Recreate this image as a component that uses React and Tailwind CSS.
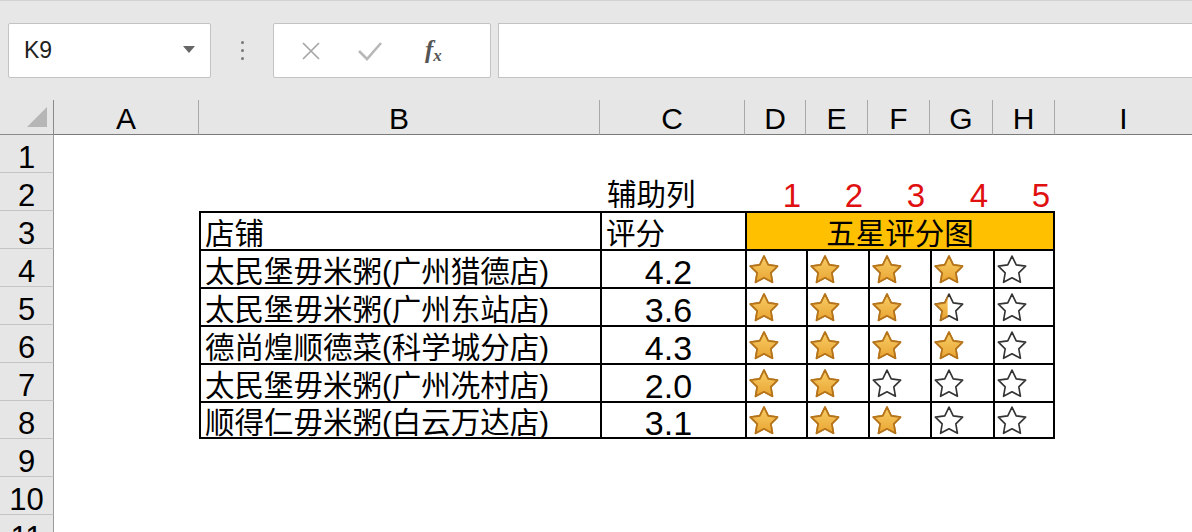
import React from "react";

const FONT = { fontFamily: '"Liberation Sans", "Noto Sans CJK SC", sans-serif' };

function Star({ fill, id }) {
  const path =
    "M12 1.8l3.1 6.4 6.9 1-5 4.9 1.2 6.9-6.2-3.3-6.2 3.3 1.2-6.9-5-4.9 6.9-1z";
  return (
    <svg width="30" height="30" viewBox="1 1 22 22">
      <defs>
        <linearGradient id={`g${id}`} x1="0" y1="0" x2="0" y2="1">
          <stop offset="0" stopColor="#f8cd66" />
          <stop offset="1" stopColor="#e9a533" />
        </linearGradient>
        <clipPath id={`c${id}`}>
          <rect x="0" y="0" width={2 + 20 * fill} height="24" />
        </clipPath>
      </defs>
      <path d={path} fill="#ffffff" stroke={fill === 1 ? "#b5731a" : "#333333"} strokeWidth="1.2" strokeLinejoin="round" />
      {fill > 0 && (
        <path
          d={path}
          fill={`url(#g${id})`}
          stroke="#b5731a"
          strokeWidth="1.3"
          strokeLinejoin="round"
          clipPath={`url(#c${id})`}
        />
      )}
    </svg>
  );
}

const rows = [
  { name: "太民堡毋米粥(广州猎德店)", score: "4.2", stars: [1, 1, 1, 1, 0] },
  { name: "太民堡毋米粥(广州东站店)", score: "3.6", stars: [1, 1, 1, 0.45, 0] },
  { name: "德尚煌顺德菜(科学城分店)", score: "4.3", stars: [1, 1, 1, 1, 0] },
  { name: "太民堡毋米粥(广州冼村店)", score: "2.0", stars: [1, 1, 0, 0, 0] },
  { name: "顺得仁毋米粥(白云万达店)", score: "3.1", stars: [1, 1, 1, 0, 0] },
];

const cols = ["A", "B", "C", "D", "E", "F", "G", "H", "I"];

function RowHead({ n }) {
  return (
    <div className="flex items-center justify-center border-b border-r border-b-[#c4c4c4] border-r-[#9a9a9a] bg-[#e6e6e6] text-[31px] text-black pt-[10px]">
      {n}
    </div>
  );
}

export default function App() {
  const B = "border-black";
  return (
    <div className="w-[1192px] h-[532px] overflow-hidden bg-white" style={FONT}>
      {/* toolbar */}
      <div className="h-[100px] bg-[#e7e7e7] border-t border-[#d2d2d2] flex items-center pl-[8px]">
        <div className="w-[203px] h-[55px] bg-white border border-[#c3c3c3] rounded-[2px] flex items-center justify-between pl-[15px] pr-[15px]">
          <span className="text-[23px] text-[#222]">K9</span>
          <span className="w-0 h-0 border-l-[6px] border-r-[6px] border-t-[7px] border-l-transparent border-r-transparent border-t-[#666] mb-[2px]"></span>
        </div>
        <div className="w-[62px] flex flex-col items-center gap-[5px]">
          <span className="w-[3px] h-[3px] rounded-full bg-[#777]"></span>
          <span className="w-[3px] h-[3px] rounded-full bg-[#777]"></span>
          <span className="w-[3px] h-[3px] rounded-full bg-[#777]"></span>
        </div>
        <div className="w-[218px] h-[55px] bg-white border border-[#c3c3c3] rounded-[2px] flex items-center">
          <svg className="ml-[27px]" width="20" height="20" viewBox="0 0 20 20">
            <path d="M2 2L18 18M18 2L2 18" stroke="#a6a6a6" strokeWidth="1.7" />
          </svg>
          <svg className="ml-[36px]" width="26" height="22" viewBox="0 0 26 22">
            <path d="M2 11L10 19L24 3" stroke="#b8b8b8" strokeWidth="2.6" fill="none" />
          </svg>
          <span className="ml-[42px] text-[#555] italic font-bold text-[25px] leading-none" style={{ fontFamily: '"Liberation Serif", serif' }}>
            f<span className="text-[17px] align-[-3px]">x</span>
          </span>
        </div>
        <div className="ml-[7px] flex-1 h-[55px] bg-white border border-r-0 border-[#c3c3c3]"></div>
      </div>

      {/* grid */}
      <div className="grid grid-cols-[54px_145px_401px_145px_61px_62px_62px_63px_62px_1fr] grid-rows-[35px_repeat(11,38px)]">
        <div className="bg-[#e6e6e6] border-b border-r border-[#8a8a8a] relative">
          <svg className="absolute right-[6px] bottom-[7px]" width="20" height="20" viewBox="0 0 20 20">
            <path d="M20 0L20 20L0 20Z" fill="#b6b6b6" />
          </svg>
        </div>
        {cols.map((c, i) => (
          <div
            key={c}
            className={`bg-[#e6e6e6] border-b border-b-[#7a7a7a] flex items-center justify-center text-[30px] text-black pt-[2px] ${
              i < cols.length - 1 ? "border-r border-r-[#a8a8a8]" : ""
            }`}
          >
            {c}
          </div>
        ))}

        {/* row 1 */}
        <RowHead n={1} />
        <div className="col-span-9"></div>

        {/* row 2 */}
        <RowHead n={2} />
        <div></div>
        <div></div>
        <div className="flex items-center pl-[7px] pt-[6px] text-[29.5px] text-black whitespace-nowrap">辅助列</div>
        {[1, 2, 3, 4, 5].map((n) => (
          <div key={n} className="flex items-center justify-end pr-[5px] pt-[8px] text-[33px] text-[#e01010]">
            {n}
          </div>
        ))}
        <div></div>

        {/* row 3 */}
        <RowHead n={3} />
        <div></div>
        <div className={`border-l-2 border-t-2 ${B} flex items-center pl-[4px] pt-[6px] text-[29.5px] text-black`}>店铺</div>
        <div className={`border-l-2 border-t-2 ${B} flex items-center pl-[4px] pt-[6px] text-[29.5px] text-black`}>评分</div>
        <div className={`col-span-5 border-l-2 border-t-2 border-r-2 ${B} bg-[#ffc000] flex items-center justify-center pt-[6px] text-[29.5px] text-black`}>
          五星评分图
        </div>
        <div></div>

        {rows.map((r, ri) => {
          const last = ri === rows.length - 1;
          const bb = last ? "border-b-2" : "";
          return (
            <React.Fragment key={ri}>
              <RowHead n={ri + 4} />
              <div></div>
              <div className={`border-l-2 border-t-2 ${bb} ${B} flex items-center pl-[4px] pt-[6px] text-[29.5px] text-black whitespace-nowrap`}>
                {r.name}
              </div>
              <div className={`border-l-2 border-t-2 ${bb} ${B} flex items-center justify-center pr-[10px] pt-[6px] text-[34px] text-black`}>
                {r.score}
              </div>
              {r.stars.map((s, si) => (
                <div
                  key={si}
                  className={`border-l-2 border-t-2 ${bb} ${si === 4 ? "border-r-2" : ""} ${B} flex items-center pl-[2px] pt-[1px]`}
                >
                  <Star fill={s} id={`${ri}-${si}`} />
                </div>
              ))}
              <div></div>
            </React.Fragment>
          );
        })}

        <RowHead n={9} />
        <div className="col-span-9"></div>
        <RowHead n={10} />
        <div className="col-span-9"></div>
        <RowHead n={11} />
        <div className="col-span-9"></div>
      </div>
    </div>
  );
}
